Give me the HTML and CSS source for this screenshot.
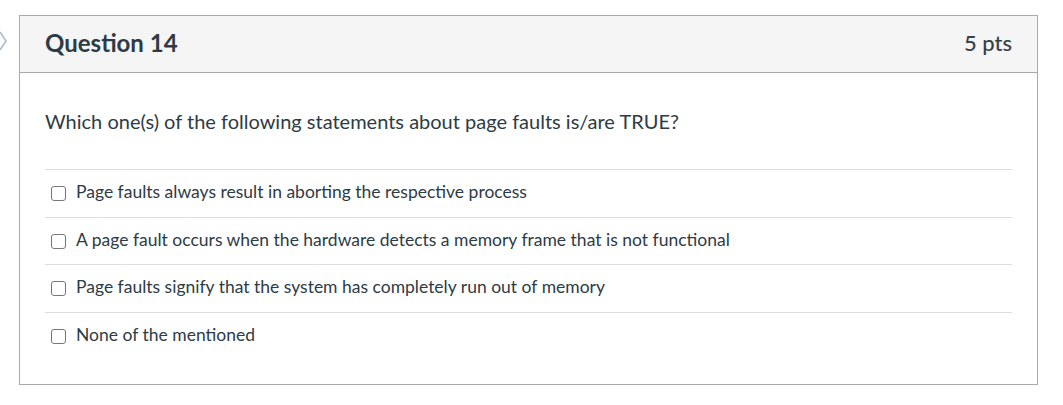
FILE: index.html
```html
<!DOCTYPE html>
<html>
<head>
<meta charset="utf-8">
<link rel="stylesheet" href="styles.css">
</head>
<body>
<div class="page">
  <div class="chevron">
    <svg width="9" height="20" viewBox="0 0 9 20"><path d="M1 1 L7 10 L1 19" fill="none" stroke="#a9bdd0" stroke-width="1.6"/></svg>
  </div>
  <div class="question">
    <div class="header">
      <span class="title">Question 14</span>
      <span class="points">5 pts</span>
    </div>
    <div class="body">
      <div class="text">Which one(s) of the following statements about page faults is/are TRUE?</div>
      <div class="answers">
        <label class="answer"><span class="box"></span><span>Page faults always result in aborting the respective process</span></label>
        <label class="answer"><span class="box"></span><span>A page fault occurs when the hardware detects a memory frame that is not functional</span></label>
        <label class="answer"><span class="box"></span><span>Page faults signify that the system has completely run out of memory</span></label>
        <label class="answer"><span class="box"></span><span>None of the mentioned</span></label>
      </div>
    </div>
  </div>
</div>
</body>
</html>
```

FILE: styles.css
```css
html, body {
  margin: 0;
  padding: 0;
  background: #ffffff;
}
body {
  font-family: Lato, "Open Sans", sans-serif;
  color: #2d3b45;
}
.page {
  position: relative;
  padding: 15px 0 0 19px;
  width: 1019px;
}
.chevron {
  position: absolute;
  left: -1px;
  top: 31px;
  line-height: 0;
}
.question {
  border: 1px solid #aaaaaa;
  width: 1019px;
  height: 370px;
  box-sizing: border-box;
}
.header {
  background: #f5f5f5;
  border-bottom: 1px solid #aaaaaa;
  height: 57px;
  box-sizing: border-box;
  display: flex;
  align-items: center;
  justify-content: space-between;
  padding: 0 25px 3px 25px;
}
.title {
  font-size: 24px;
  font-weight: 700;
}
.points {
  font-size: 22px;
  font-weight: 500;
  color: #383f45;
}
.body {
  padding: 35px 25px 0 25px;
}
.text {
  font-size: 20px;
  line-height: 26px;
  margin-bottom: 35px;
}
.answer {
  display: flex;
  align-items: center;
  height: 47.5px;
  padding-bottom: 3px;
  border-top: 1px solid #dddddd;
  font-size: 17.5px;
  box-sizing: border-box;
}
.box {
  width: 15px;
  height: 15px;
  border: 1.5px solid #777777;
  border-radius: 3px;
  box-sizing: border-box;
  margin: 4px 10px 0 6px;
  flex: none;
}
```
